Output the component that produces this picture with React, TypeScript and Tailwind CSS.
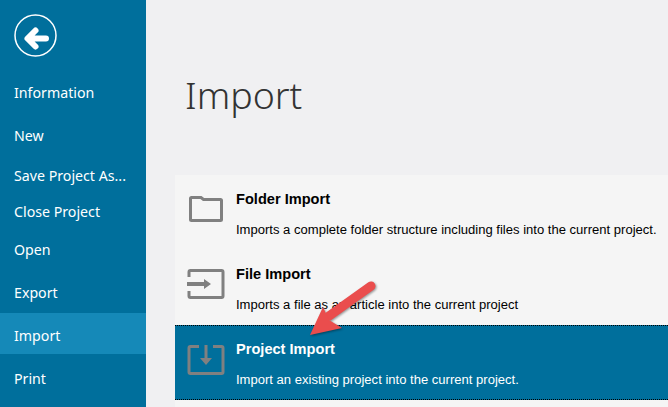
const sidebarItems = [
  { label: "Information", height: "h-[43px]" },
  { label: "New", height: "h-[43px]" },
  { label: "Save Project As...", height: "h-[37px]" },
  { label: "Close Project", height: "h-[34px] pt-[1px]" },
  { label: "Open", height: "h-[43px]" },
  { label: "Export", height: "h-[42px] pt-[1px]" },
  { label: "Import", height: "h-[41px] pt-[4px]", active: true },
  { label: "Print", height: "h-[53px] pb-[10px] pt-[6px]" },
];

function FolderIcon() {
  return (
    <svg className="mt-[2px]" width="34" height="26" viewBox="0 0 34 26" fill="none">
      <path
        d="M1.5 23.5V2.5C1.5 1.8 1.8 1.5 2.5 1.5H12L14.5 3.5H31.5C32.2 3.5 32.5 3.8 32.5 4.5V23.5C32.5 24.2 32.2 24.5 31.5 24.5H2.5C1.8 24.5 1.5 24.2 1.5 23.5Z"
        stroke="#808080"
        strokeWidth="3"
      />
    </svg>
  );
}

function FileImportIcon() {
  return (
    <svg width="38" height="30" viewBox="0 0 38 30" fill="none">
      <path d="M2 8V3C2 2 2.5 1.5 3.5 1.5H34.5C35.5 1.5 36 2 36 3V27C36 28 35.5 28.5 34.5 28.5H3.5C2.5 28.5 2 28 2 27V22" stroke="#808080" strokeWidth="3" />
      <path d="M0 13H17V10L24 15L17 20V17H0Z" fill="#808080" />
    </svg>
  );
}

function ProjectImportIcon() {
  return (
    <svg width="38" height="30" viewBox="0 0 38 30" fill="none">
      <path d="M12 1.5H3.5C2.5 1.5 2 2 2 3V27C2 28 2.5 28.5 3.5 28.5H34.5C35.5 28.5 36 28 36 27V3C36 2 35.5 1.5 34.5 1.5H26" stroke="#808080" strokeWidth="3" />
      <path d="M17.5 0H20.5V13H25L19 20L13 13H17.5Z" fill="#808080" />
    </svg>
  );
}

function ImportRow({
  icon,
  title,
  text,
  selected,
}: {
  icon: React.ReactNode;
  title: string;
  text: string;
  selected?: boolean;
}) {
  return (
    <div
      className={
        selected
          ? "flex h-[75px] border-y border-dotted border-black bg-[#006f9c] text-white"
          : "flex h-[75px] text-black"
      }
    >
      <div className={selected ? "flex w-[61px] shrink-0 justify-center pt-[19px]" : "flex w-[61px] shrink-0 items-start justify-center pt-[19px]"}>{icon}</div>
      <div className={selected ? "whitespace-nowrap pt-[13px] font-['Liberation_Sans',sans-serif]" : "whitespace-nowrap pt-[14px] font-['Liberation_Sans',sans-serif]"}>
        <div className="text-[14.6px] font-bold leading-[20px]">{title}</div>
        <div className="mt-[13px] text-[13.05px] leading-[16px]">{text}</div>
      </div>
    </div>
  );
}

export default function App() {
  return (
    <div className="relative flex h-[407px] w-[668px] overflow-hidden bg-[#f0f0f2]">
      <aside className="h-full w-[146px] shrink-0 bg-[#006f9c] text-white">
        <div className="h-[71px] pl-[14px] pt-[14px]">
          <svg width="43" height="43" viewBox="0 0 43 43" fill="none">
            <circle cx="21.5" cy="21.5" r="20.5" stroke="white" strokeWidth="1.5" />
            <path d="M32 24.5H14M21.5 16.5L13.5 24.5L21.5 32.5" stroke="white" strokeWidth="6" strokeLinecap="round" strokeLinejoin="round" />
          </svg>
        </div>
        {sidebarItems.map((item) => (
          <div
            key={item.label}
            className={`flex ${item.height} items-center pl-[14px] font-['Noto_Sans',sans-serif] text-[14.2px] ${
              item.active ? "bg-[#1589b8]" : ""
            }`}
          >
            {item.label}
          </div>
        ))}
      </aside>

      <main className="min-w-0 flex-1">
        <h1 className="h-[175px] pl-[39px] pt-[65px] font-['Noto_Sans',sans-serif] text-[37.5px] font-light leading-[60px] text-[#333]">
          Import
        </h1>
        <div className="ml-[29px] h-[232px] bg-[#f5f5f5]">
          <ImportRow
            icon={<FolderIcon />}
            title="Folder Import"
            text="Imports a complete folder structure including files into the current project."
          />
          <ImportRow
            icon={<FileImportIcon />}
            title="File Import"
            text="Imports a file as an article into the current project"
          />
          <ImportRow
            icon={<ProjectImportIcon />}
            title="Project Import"
            text="Import an existing project into the current project."
            selected
          />
        </div>
      </main>

      <svg className="absolute left-[305px] top-[276px] drop-shadow-[1px_1px_1px_rgba(0,0,0,0.4)]" width="76" height="64" viewBox="0 0 76 64" fill="none">
        <path d="M66 10L24 40" stroke="#ea4d4d" strokeWidth="9" strokeLinecap="round" />
        <path d="M5 59L18 31L24 44L37 52Z" fill="#ea4d4d" />
      </svg>
    </div>
  );
}
